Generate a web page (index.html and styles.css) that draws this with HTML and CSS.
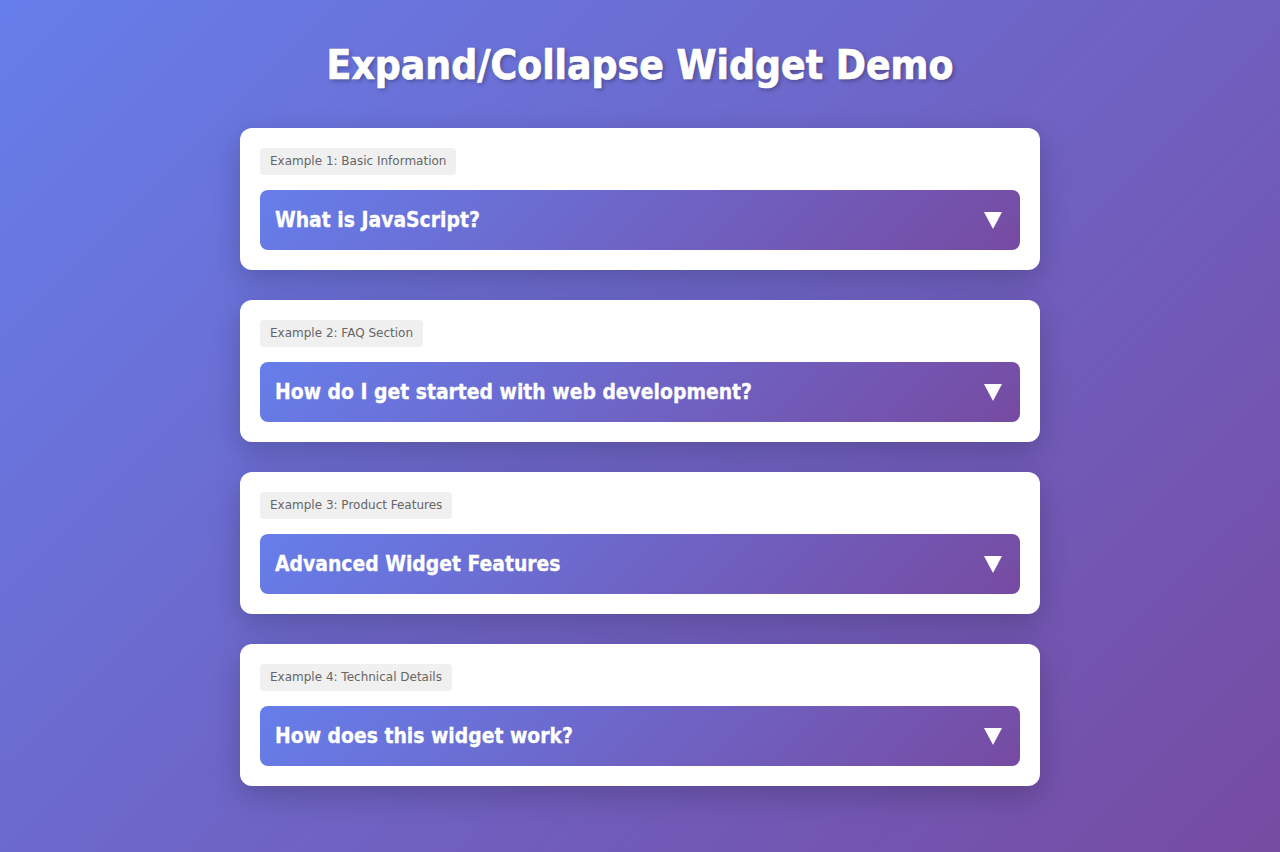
FILE: index.html
```html
<!DOCTYPE html>
<html lang="en">
<head>
<meta charset="utf-8">
<title>Expand/Collapse Widget Demo</title>
<link rel="stylesheet" href="styles.css">
</head>
<body>
<div class="container">
  <h1 class="title">Expand/Collapse Widget Demo</h1>

  <div class="card">
    <span class="label">Example 1: Basic Information</span>
    <div class="header"><span class="header-text">What is JavaScript?</span><svg class="arrow" viewBox="0 0 18 17" width="18" height="17"><polygon points="0,0 18,0 9,17" fill="#fff"/></svg></div>
  </div>

  <div class="card">
    <span class="label">Example 2: FAQ Section</span>
    <div class="header"><span class="header-text">How do I get started with web development?</span><svg class="arrow" viewBox="0 0 18 17" width="18" height="17"><polygon points="0,0 18,0 9,17" fill="#fff"/></svg></div>
  </div>

  <div class="card">
    <span class="label">Example 3: Product Features</span>
    <div class="header"><span class="header-text">Advanced Widget Features</span><svg class="arrow" viewBox="0 0 18 17" width="18" height="17"><polygon points="0,0 18,0 9,17" fill="#fff"/></svg></div>
  </div>

  <div class="card">
    <span class="label">Example 4: Technical Details</span>
    <div class="header"><span class="header-text">How does this widget work?</span><svg class="arrow" viewBox="0 0 18 17" width="18" height="17"><polygon points="0,0 18,0 9,17" fill="#fff"/></svg></div>
  </div>
</div>
</body>
</html>
```

FILE: styles.css
```css
html, body {
  margin: 0;
  padding: 0;
}
body {
  min-height: 852px;
  background: linear-gradient(135deg, #667eea 0%, #764ba2 100%);
  font-family: "DejaVu Sans Condensed", "DejaVu Sans", sans-serif;
  padding: 20px;
  box-sizing: border-box;
}
.container {
  max-width: 800px;
  margin: 0 auto;
}
.title {
  margin: 21px 0 39px;
  text-align: center;
  color: #fff;
  font-size: 40.4px;
  line-height: 48px;
  font-weight: bold;
  -webkit-text-stroke: 0.7px #fff;
  text-shadow: 2px 2px 4px rgba(0, 0, 0, 0.3);
}
.card {
  background: #fff;
  border-radius: 12px;
  padding: 20px;
  margin-bottom: 30px;
  box-shadow: 0 10px 30px rgba(0, 0, 0, 0.2);
  display: flex;
  flex-direction: column;
  align-items: flex-start;
}
.label {
  display: inline-block;
  background: #f0f0f0;
  color: #666;
  font-family: "DejaVu Sans", sans-serif;
  font-size: 12px;
  line-height: 19px;
  padding: 4px 10px;
  border-radius: 4px;
}
.header {
  align-self: stretch;
  margin-top: 15px;
  display: flex;
  justify-content: space-between;
  align-items: center;
  padding: 15px 18px 15px 15px;
  border-radius: 8px;
  background: linear-gradient(135deg, #667eea 0%, #764ba2 100%);
  color: #fff;
}
.header-text {
  font-size: 20.9px;
  line-height: 30px;
  font-weight: bold;
  -webkit-text-stroke: 0.3px #fff;
}
.arrow {
  display: block;
  flex-shrink: 0;
}
```
